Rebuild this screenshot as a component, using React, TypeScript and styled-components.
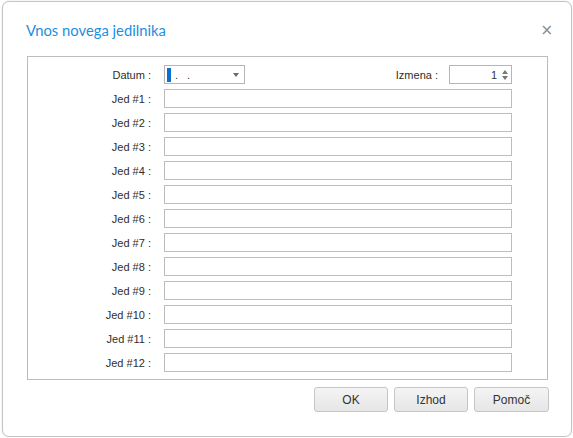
import React from "react";
import styled, { createGlobalStyle } from "styled-components";

const Global = createGlobalStyle`
  html, body { margin: 0; padding: 0; background: #ffffff; }
  body { font-family: "Liberation Sans", Arial, sans-serif; }
`;

const Window = styled.div`
  box-sizing: border-box;
  width: 570px;
  height: 436px;
  margin: 1px 0 0 2px;
  border: 1px solid #c4c4c4;
  border-radius: 7px;
  background: #fff;
  box-shadow: 0 0 2px rgba(0,0,0,0.12);
  display: flex;
  flex-direction: column;
  padding: 0 22px 0 24px;
`;

const TitleBar = styled.div`
  display: flex;
  align-items: center;
  justify-content: space-between;
  height: 54px;
  box-sizing: border-box;
`;

const Title = styled.div`
  font-family: Lato, "Open Sans", sans-serif;
  font-size: 14.8px;
  font-weight: 400;
  color: #1a8fe0;
  margin-left: -1px;
  margin-top: 1px;
`;

const Close = styled.div`
  font-family: "DejaVu Sans", sans-serif;
  font-size: 15px;
  color: #8a8a8a;
  margin-right: -4px;
  margin-top: 1px;
`;

const Group = styled.div`
  box-sizing: border-box;
  width: 521px;
  border: 1px solid #bcbcbc;
  padding: 8px 35px 7px 0;
  display: flex;
  flex-direction: column;
  gap: 5px;
`;

const Row = styled.div`
  display: flex;
  align-items: center;
  height: 19px;
`;

const Label = styled.div<{ $w?: number; $pr?: number }>`
  width: ${(p) => p.$w ?? 123}px;
  text-align: right;
  font-size: 11px;
  color: #2e2e2e;
  padding-right: ${(p) => p.$pr ?? 13}px;
  flex: none;
`;

const TextBox = styled.div`
  box-sizing: border-box;
  flex: 1;
  height: 19px;
  border: 1px solid #bdbdbd;
  background: #fff;
`;

const DateBox = styled.div`
  box-sizing: border-box;
  width: 81px;
  height: 19px;
  border: 1px solid #b5b5b5;
  display: flex;
  align-items: center;
  padding-left: 2px;
  position: relative;
  font-size: 11px;
  color: #333;
`;

const Caret = styled.span`
  display: inline-block;
  width: 4px;
  height: 14px;
  background: #0a6fcf;
`;

const Dots = styled.span`
  margin-left: 4px;
  letter-spacing: 3px;
  line-height: 1;
  margin-top: 1px;
`;

const Arrow = styled.span`
  position: absolute;
  right: 5px;
  top: 7px;
  width: 0;
  height: 0;
  border-left: 3.5px solid transparent;
  border-right: 3.5px solid transparent;
  border-top: 4px solid #6a6a6a;
`;

const Spacer = styled.div`
  flex: 1;
`;

const SpinBox = styled.div`
  box-sizing: border-box;
  width: 63px;
  height: 19px;
  border: 1px solid #b5b5b5;
  display: flex;
  align-items: center;
  justify-content: flex-end;
  font-size: 11px;
  color: #333;
  gap: 5px;
  padding-right: 3px;
`;

const SpinArrows = styled.div`
  display: flex;
  flex-direction: column;
  gap: 2px;
`;

const Tri = styled.span<{ $up?: boolean }>`
  width: 0;
  height: 0;
  border-left: 3.5px solid transparent;
  border-right: 3.5px solid transparent;
  ${(p) => (p.$up ? "border-bottom: 4px solid #777;" : "border-top: 4px solid #777;")}
`;

const Buttons = styled.div`
  display: flex;
  justify-content: flex-end;
  gap: 6px;
  margin-top: 7px;
  width: 522px;
`;

const Button = styled.button<{ $w?: number }>`
  box-sizing: border-box;
  width: ${(p) => p.$w ?? 74}px;
  height: 25px;
  border: 1px solid #c6c6c6;
  border-radius: 3px;
  background: linear-gradient(#f4f4f4, #e6e6e6);
  font-family: "Liberation Sans", Arial, sans-serif;
  font-size: 12px;
  color: #333;
  padding: 0;
`;

export default function App() {
  const jeds = Array.from({ length: 12 }, (_, i) => i + 1);
  return (
    <>
      <Global />
      <Window>
        <TitleBar>
          <Title>Vnos novega jedilnika</Title>
          <Close>×</Close>
        </TitleBar>
        <Group>
          <Row>
            <Label>Datum :</Label>
            <DateBox>
              <Caret />
              <Dots>. .</Dots>
              <Arrow />
            </DateBox>
            <Spacer />
            <Label $w={60} $pr={11}>Izmena :</Label>
            <SpinBox>
              1
              <SpinArrows>
                <Tri $up />
                <Tri />
              </SpinArrows>
            </SpinBox>
          </Row>
          {jeds.map((n) => (
            <Row key={n}>
              <Label>Jed #{n} :</Label>
              <TextBox />
            </Row>
          ))}
        </Group>
        <Buttons>
          <Button>OK</Button>
          <Button>Izhod</Button>
          <Button $w={75}>Pomoč</Button>
        </Buttons>
      </Window>
    </>
  );
}
